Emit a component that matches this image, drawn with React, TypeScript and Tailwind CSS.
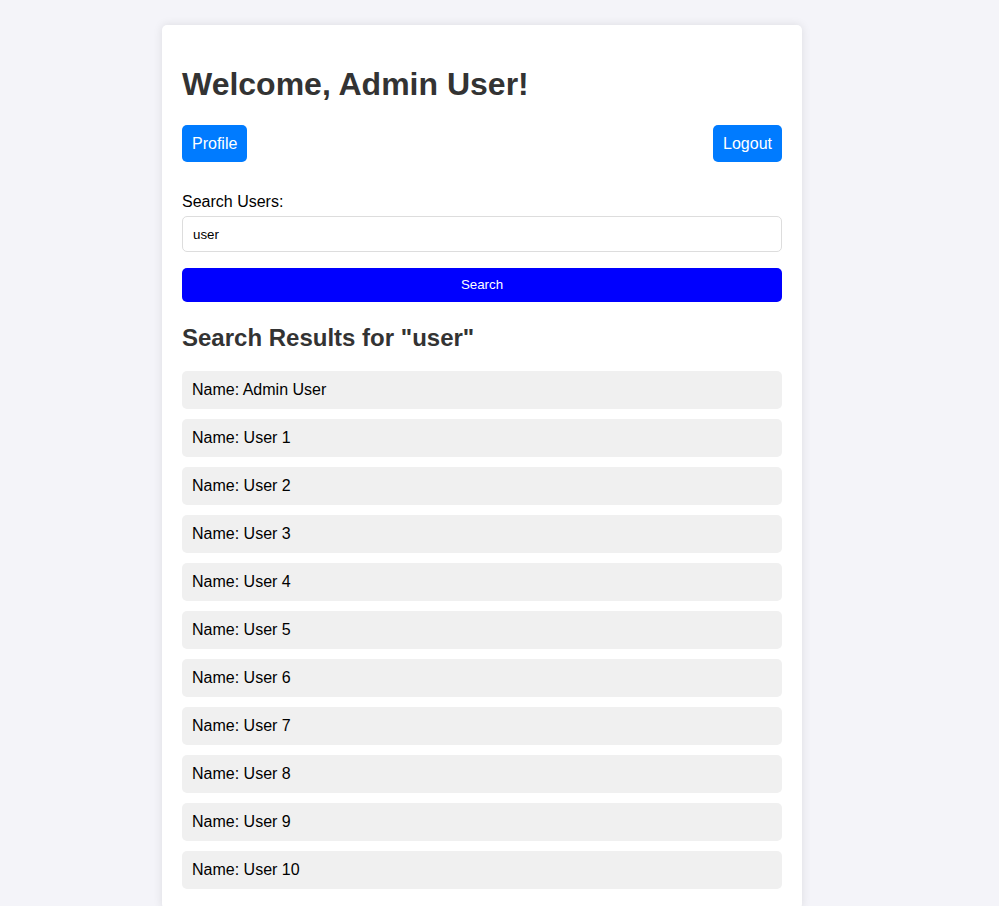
import { useState } from "react";

const USERS = ["Admin User", ...Array.from({ length: 10 }, (_, i) => `User ${i + 1}`)];

export default function App() {
  const [query, setQuery] = useState("user");

  return (
    <div className="min-h-screen bg-[#f4f4f9] pt-[25px] pb-10 font-['Liberation_Sans',Arial,sans-serif]">
      <div className="ml-[162px] w-[640px] rounded-[5px] bg-white p-5 shadow-[0_0_10px_rgba(0,0,0,0.1)]">
        <h1 className="mt-[21px] mb-[22px] text-[32px] leading-[37px] font-bold text-[#333]">
          Welcome, Admin User!
        </h1>

        <div className="flex items-center justify-between">
          <button className="h-[37px] rounded-[5px] bg-[#007bff] px-[10px] text-base text-white">
            Profile
          </button>
          <button className="h-[37px] rounded-[5px] bg-[#007bff] px-[10px] text-base text-white">
            Logout
          </button>
        </div>

        <label className="mt-[31px] block text-base leading-[18px] text-black">Search Users:</label>
        <input
          value={query}
          onChange={(e) => setQuery(e.target.value)}
          className="mt-[5px] block h-[36px] w-full rounded-[5px] border border-[#ddd] px-[10px] text-[13.33px] text-black outline-none"
        />
        <button className="mt-4 block h-[34px] w-full rounded-[5px] bg-[#0000ff] text-[13.33px] text-white">
          Search
        </button>

        <h2 className="mt-[22px] mb-[19px] text-2xl leading-[28px] font-bold text-[#333]">
          Search Results for "{query}"
        </h2>

        <ul className="flex flex-col gap-[10px]">
          {USERS.map((name) => (
            <li key={name} className="rounded-[5px] bg-[#f0f0f0] px-[10px] py-[10px] text-base leading-[18px] text-black">
              Name: {name}
            </li>
          ))}
        </ul>
      </div>
    </div>
  );
}
